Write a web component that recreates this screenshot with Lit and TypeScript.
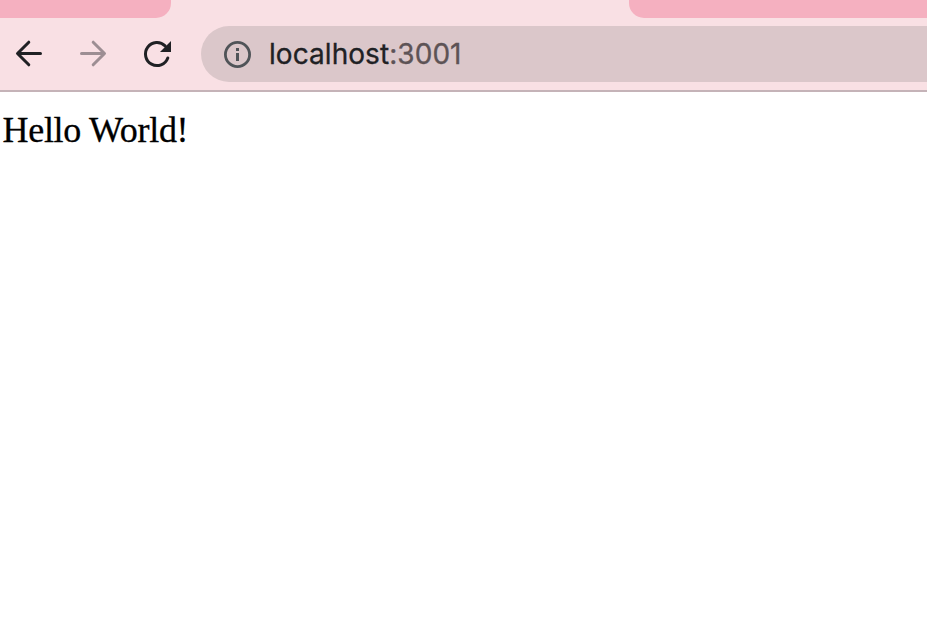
import { LitElement, html, css } from "lit";
import { customElement } from "lit/decorators.js";

@customElement("app-root")
export class AppRoot extends LitElement {
  static styles = css`
    :host { display: flex; flex-direction: column; height: 100vh; overflow: hidden; background: #fff; }
    .tabs { display: flex; justify-content: space-between; flex: none; height: 26px; background: #f9e0e4; }
    .tab { height: 18px; background: #f5b0c0; }
    .left { width: 171px; border-bottom-right-radius: 15px; }
    .right { width: 298px; border-bottom-left-radius: 15px; }
    .toolbar { display: flex; flex: none; height: 64px; background: #f9e0e4; border-bottom: 2px solid #c5b3b8; }
    .nav { display: flex; gap: 32px; flex: none; width: 188px; padding: 11px 0 0 13px; }
    svg { display: block; flex: none; width: 32px; height: 32px; }
    .address { display: flex; flex: 1; height: 56px; box-sizing: border-box; padding-left: 20px; border-radius: 28px 0 0 28px; background: #dbc7ca; }
    .info { margin-top: 12px; }
    .url { margin-left: 16px; font: 28px/56px Inter, sans-serif; letter-spacing: 0.06px; color: #202124; white-space: nowrap; -webkit-text-stroke: 0.3px currentColor; }
    .port { color: #5d5356; }
    .page { flex: 1; padding: 17px 0 0 2.5px; font: 36px/42px "Liberation Serif", serif; letter-spacing: -0.3px; color: #000; -webkit-text-stroke: 0.3px #000; }
  `;

  render() {
    return html`
      <div class="tabs"><div class="tab left"></div><div class="tab right"></div></div>
      <div class="toolbar">
        <div class="nav">
          <svg viewBox="0 0 32 32" fill="none" stroke="#202124" stroke-width="3" stroke-linecap="round" stroke-linejoin="round">
            <path d="M27.5 16.5H5M15.8 5.2L4.5 16.5L15.8 27.8" />
          </svg>
          <svg viewBox="0 0 32 32" fill="none" stroke="#9d8e93" stroke-width="3" stroke-linecap="round" stroke-linejoin="round">
            <path d="M4.5 16.5H27M16.2 5.2L27.5 16.5L16.2 27.8" />
          </svg>
          <svg viewBox="0 0 32 32">
            <path d="M26.8 21A11.5 11.5 0 1 1 24.1 8.9" fill="none" stroke="#202124" stroke-width="3" stroke-linecap="round" />
            <path d="M30 4V15H19Z" fill="#202124" />
          </svg>
        </div>
        <div class="address">
          <svg class="info" viewBox="0 0 32 32">
            <circle cx="16.5" cy="16.5" r="12.1" fill="none" stroke="#505458" stroke-width="2.8" />
            <path d="M15 10h3v3h-3zM15 15h3v8h-3z" fill="#505458" />
          </svg>
          <div class="url">localhost<span class="port">:3001</span></div>
        </div>
      </div>
      <div class="page">Hello World!</div>
    `;
  }
}
